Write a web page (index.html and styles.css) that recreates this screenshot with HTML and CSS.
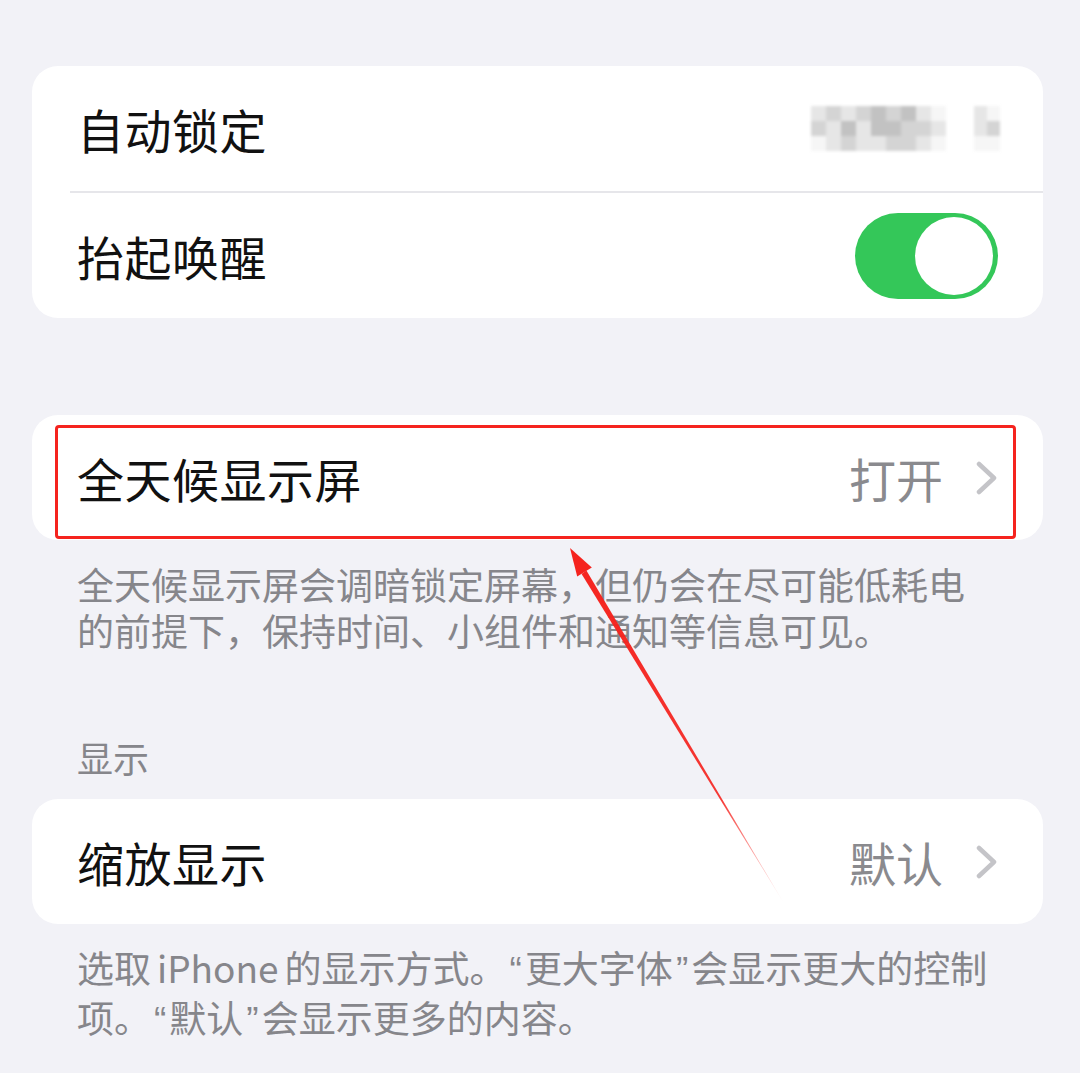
FILE: index.html
```html
<!DOCTYPE html>
<html lang="zh-CN">
<head>
<meta charset="utf-8">
<link rel="stylesheet" href="styles.css">
</head>
<body>
<div class="page">
  <div class="card first">
    <div class="row">
      <span class="label">自动锁定</span>
      <div class="mosaic-wrap">
        <div class="mosaic">
          <i class="c1"></i><i class="c2"></i><i class="c1"></i><i class="c2"></i><i class="c3"></i><i class="c2"></i><i class="c3"></i><i class="c1"></i><i class="c0"></i>
          <i class="c2"></i><i class="c1"></i><i class="c3"></i><i class="c1"></i><i class="c3"></i><i class="c3"></i><i class="c2"></i><i class="c2"></i><i class="c1"></i>
          <i class="c0"></i><i class="c1"></i><i class="c2"></i><i class="c1"></i><i class="c1"></i><i class="c2"></i><i class="c2"></i><i class="c1"></i><i class="c0"></i>
        </div>
        <div class="mosaic small">
          <i class="c1"></i><i class="c0"></i>
          <i class="c1"></i><i class="c2"></i>
          <i class="c0"></i><i class="c0"></i>
        </div>
      </div>
    </div>
    <div class="sep"></div>
    <div class="row">
      <span class="label">抬起唤醒</span>
      <div class="toggle"><div class="knob"></div></div>
    </div>
  </div>

  <div class="card second">
    <div class="row">
      <span class="label">全天候显示屏</span>
      <div class="value-wrap">
        <span class="value">打开</span>
        <svg class="chev" width="22" height="34" viewBox="0 0 22 34"><path d="M3 3 L18 17 L3 31" fill="none" stroke="#c4c4c8" stroke-width="4.5" stroke-linecap="round" stroke-linejoin="round"/></svg>
      </div>
    </div>
    <div class="highlight"></div>
  </div>
  <p class="footer">全天候显示屏会调暗锁定屏幕，但仍会在尽可能低耗电<br>的前提下，保持时间、小组件和通知等信息可见。</p>

  <div class="section-title">显示</div>
  <div class="card">
    <div class="row">
      <span class="label">缩放显示</span>
      <div class="value-wrap">
        <span class="value">默认</span>
        <svg class="chev" width="22" height="34" viewBox="0 0 22 34"><path d="M3 3 L18 17 L3 31" fill="none" stroke="#c4c4c8" stroke-width="4.5" stroke-linecap="round" stroke-linejoin="round"/></svg>
      </div>
    </div>
  </div>
  <p class="footer second-footer">选取<span class="latin">iPhone</span>的显示方式。<span class="q">“</span>更大字体<span class="q">”</span>会显示更大的控制<br>项。<span class="q">“</span>默认<span class="q">”</span>会显示更多的内容。</p>
</div>

<svg class="arrow" width="1080" height="1073" viewBox="0 0 1080 1073">
  <defs>
    <linearGradient id="fade" x1="570" y1="548" x2="785" y2="905" gradientUnits="userSpaceOnUse">
      <stop offset="0" stop-color="#f5231e" stop-opacity="1"/>
      <stop offset="0.7" stop-color="#f5231e" stop-opacity="0.9"/>
      <stop offset="1" stop-color="#f5231e" stop-opacity="0"/>
    </linearGradient>
  </defs>
  <polygon points="581.6,574 586.4,570.6 785,905" fill="url(#fade)"/>
  <polygon points="570,548 591.8,567.4 577.2,576.4" fill="#f5231e"/>
</svg>
</body>
</html>
```

FILE: styles.css
```css
html, body {
  margin: 0;
  padding: 0;
}
body {
  background: #f2f2f7;
  font-family: "Noto Sans CJK SC", "Noto Sans", sans-serif;
  width: 1080px;
  height: 1073px;
  overflow: hidden;
  position: relative;
}
.page {
  padding: 66px 37px 0 32px;
  display: flex;
  flex-direction: column;
}
.card {
  background: #ffffff;
  border-radius: 26px;
  position: relative;
}
.card.second {
  margin-top: 97px;
}
.row {
  height: 125px;
  display: flex;
  align-items: center;
  justify-content: space-between;
  padding: 0 45px;
}
.label {
  font-size: 47px;
  color: #111111;
  letter-spacing: 0.5px;
}
.sep {
  height: 2px;
  background: #e6e6ea;
  margin-left: 38px;
}
.toggle {
  width: 143px;
  height: 86px;
  border-radius: 43px;
  background: #34c759;
  display: flex;
  align-items: center;
  justify-content: flex-end;
  padding: 0 5px;
  box-sizing: border-box;
}
.knob {
  width: 78px;
  height: 78px;
  border-radius: 50%;
  background: #ffffff;
}
.value-wrap {
  display: flex;
  align-items: center;
  gap: 33px;
}
.value {
  font-size: 47px;
  color: #8a8a8e;
}
.chev {
  display: block;
}
.mosaic-wrap {
  display: flex;
  align-items: center;
  gap: 28px;
  margin-right: -2px;
}
.mosaic {
  display: grid;
  grid-template-columns: repeat(9, 15px);
  grid-auto-rows: 15px;
  filter: blur(1.5px);
}
.mosaic.small {
  grid-template-columns: repeat(2, 13px);
}
.mosaic i {
  display: block;
}
.c0 { background: #f6f6f6; }
.c1 { background: #e6e6e6; }
.c2 { background: #d4d4d4; }
.c3 { background: #c2c2c2; }
.highlight {
  position: absolute;
  left: 23px;
  top: 10px;
  right: 27px;
  bottom: 1px;
  border: 3px solid #f5231e;
  border-radius: 4px;
}
.footer {
  margin: 21px 0 0 45px;
  font-size: 37px;
  line-height: 46px;
  color: #86868b;
}
.latin {
  margin: 0 6px;
}
.q {
  font-family: "Liberation Sans", sans-serif;
  margin: 0 3px;
}
.section-title {
  margin: 82px 0 19px 45px;
  font-size: 36px;
  line-height: 45px;
  color: #86868b;
}
.second-footer {
  margin-top: 20px;
}
.arrow {
  position: absolute;
  left: 0;
  top: 0;
  pointer-events: none;
}
```
